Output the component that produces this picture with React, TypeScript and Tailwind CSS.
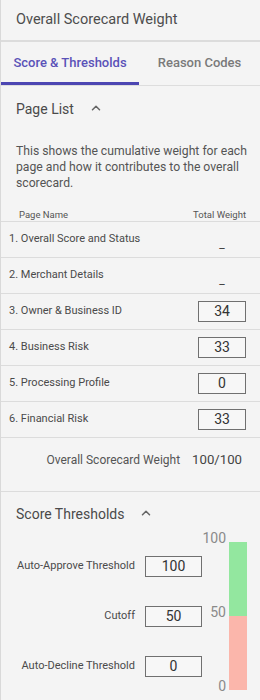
import { ChevronUp } from "lucide-react";

const pages = [
  { name: "1. Overall Score and Status", weight: null },
  { name: "2. Merchant Details", weight: null },
  { name: "3. Owner & Business ID", weight: "34" },
  { name: "4. Business Risk", weight: "33" },
  { name: "5. Processing Profile", weight: "0" },
  { name: "6. Financial Risk", weight: "33" },
];

const thresholds = [
  { label: "Auto-Approve Threshold", value: "100" },
  { label: "Cutoff", value: "50" },
  { label: "Auto-Decline Threshold", value: "0" },
];

function SectionHeading({ title }: { title: string }) {
  return (
    <div className="flex items-center gap-[15px] h-[20px] text-[14px] text-[#4a4a4a]">
      <span>{title}</span>
      <ChevronUp className="w-[14px] h-[14px] text-[#666] -mt-[3px]" strokeWidth={2.6} />
    </div>
  );
}

export default function App() {
  return (
    <div
      className="w-[260px] h-[700px] overflow-hidden bg-[#f4f4f4] border-l border-[#d9d9d9] text-[#4a4a4a]"
      style={{ fontFamily: "Roboto, 'Noto Sans', sans-serif" }}
    >
      {/* title */}
      <div className="h-[42px] flex items-center pl-[15px] text-[14.5px] text-[#4d4d4d] border-b-2 border-[#dcdcdc]">
        Overall Scorecard Weight
      </div>

      {/* tabs */}
      <div className="flex border-b border-[#dddddd]">
        <div className="w-[138px] h-[43px] flex items-center justify-center text-[13px] font-medium text-[#5a52b8] border-b-[3px] border-[#4c46b2] pt-[1px]">
          Score &amp; Thresholds
        </div>
        <div className="flex-1 h-[43px] flex items-center justify-center text-[13px] font-medium text-[#7a7a7a] pb-[2px]">
          Reason Codes
        </div>
      </div>

      {/* page list */}
      <div className="pt-[13px] pl-[15px]">
        <SectionHeading title="Page List" />
      </div>
      <p className="pl-[15px] pr-[8px] mt-[24px] text-[12.2px] leading-[16px] text-[#555]">
        This shows the cumulative weight for each page and how it contributes to the overall scorecard.
      </p>

      <div className="mt-[18px] flex justify-between pl-[18px] pr-[14px] text-[9.5px] leading-[12px] text-[#555]">
        <span>Page Name</span>
        <span>Total Weight</span>
      </div>
      <div className="border-t border-[#dcdcdc]">
        {pages.map((p) => (
          <div
            key={p.name}
            className="h-[36px] flex items-center justify-between pl-[8px] pr-[14px] border-b border-[#dcdcdc] text-[11px] text-[#4a4a4a]"
          >
            <span className={p.weight ? "" : "-mt-[1px]"}>{p.name}</span>
            {p.weight ? (
              <div className="w-[48px] h-[21px] border border-[#707070] bg-[#f7f7f7] flex items-center justify-center text-[14px] text-[#333]">
                {p.weight}
              </div>
            ) : (
              <span className="w-[48px] text-center text-[12px] text-[#444] mt-[8px]">_</span>
            )}
          </div>
        ))}
      </div>

      <div className="h-[54px] flex items-start justify-end gap-[12px] pr-[18px] pt-[12px] border-b border-[#dcdcdc]">
        <span className="text-[12px] text-[#555] leading-[20px]">Overall Scorecard Weight</span>
        <span className="text-[13.2px] text-[#444] leading-[20px]">100/100</span>
      </div>

      {/* score thresholds */}
      <div className="pt-[12px] pl-[15px]">
        <SectionHeading title="Score Thresholds" />
      </div>

      <div className="flex mt-[6px]">
        <div className="w-[201px] flex flex-col gap-[29px] pt-[26px]">
          {thresholds.map((t) => (
            <div key={t.label} className="flex items-center">
              <span className="w-[134px] text-right text-[11px] text-[#4a4a4a]">{t.label}</span>
              <div className="ml-[10px] w-[57px] h-[21px] border border-[#707070] bg-[#f7f7f7] flex items-center justify-center text-[14px] text-[#333]">
                {t.value}
              </div>
            </div>
          ))}
        </div>
        <div className="flex">
          <div className="w-[24px] h-[164px] flex flex-col justify-between items-end text-[14px] leading-[16px] text-[#8a8a8a]">
            <span>100</span>
            <span>50</span>
            <span>0</span>
          </div>
          <div className="ml-[3px] mt-[12px] w-[18px] h-[148px] flex flex-col">
            <div className="flex-1 bg-[#93e79f]" />
            <div className="flex-1 bg-[#fbb6ab]" />
          </div>
        </div>
      </div>
    </div>
  );
}
